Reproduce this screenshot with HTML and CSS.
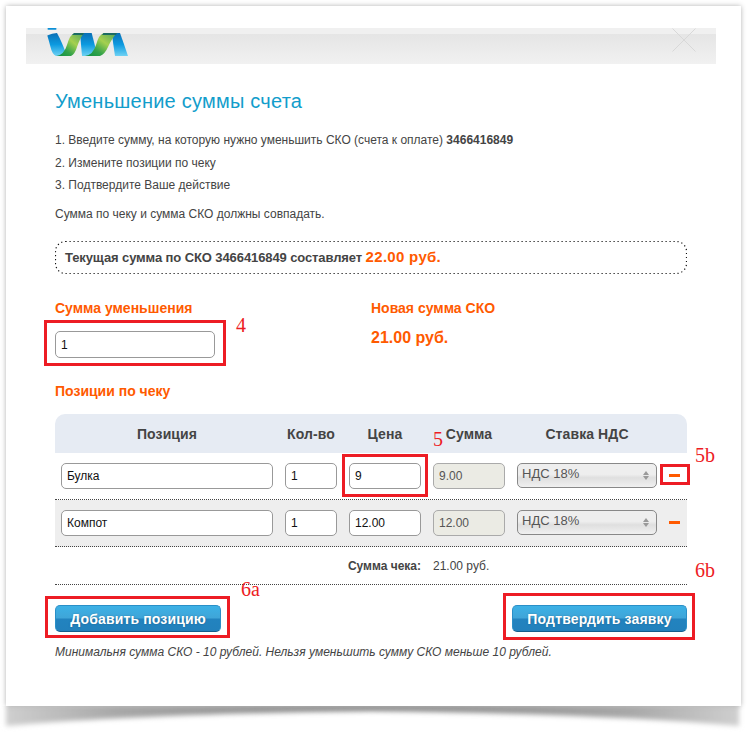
FILE: index.html
```html
<!DOCTYPE html>
<html lang="ru">
<head>
<meta charset="utf-8">
<title>Уменьшение суммы счета</title>
<link rel="stylesheet" href="styles.css">
</head>
<body>
<div class="page">
  <svg class="curl" width="755" height="29" viewBox="0 0 755 29">
    <defs>
      <filter id="soft" x="-2%" y="-30%" width="104%" height="160%"><feGaussianBlur stdDeviation="2.4"/></filter>
      <linearGradient id="curlfade" x1="0" y1="0" x2="1" y2="0">
        <stop offset="0" stop-color="#cfcfcf"/><stop offset=".15" stop-color="#a8a8a8"/><stop offset=".5" stop-color="#808080"/><stop offset=".85" stop-color="#a8a8a8"/><stop offset="1" stop-color="#cfcfcf"/>
      </linearGradient>
    </defs>
    <path d="M6 0H739V20Q610 8 372 5Q135 8 6 20Z" fill="url(#curlfade)" filter="url(#soft)"/>
  </svg>
  <main class="card">
    <header class="band">
      <svg class="logo" width="81" height="30" viewBox="0 0 81 30">
        <defs>
          <linearGradient id="blue" x1="0" y1="0" x2="0" y2="1"><stop offset="0" stop-color="#0a6fb5"/><stop offset=".5" stop-color="#0c9ae0"/><stop offset="1" stop-color="#6fd2f4"/></linearGradient>
          <linearGradient id="green" x1="0" y1="1" x2="1" y2="0"><stop offset="0" stop-color="#0b8f45"/><stop offset=".3" stop-color="#35a34a"/><stop offset=".6" stop-color="#a5d04f"/><stop offset="1" stop-color="#4fa35a"/></linearGradient>
        </defs>
        <rect x="0.5" y="0" width="9" height="1.7" rx=".8" fill="#0b8fd6"/>
        <path d="M0.3 7.5Q5 5 10 5Q15 14 20 28H9Q5 26 3.5 19Q2 13 0.3 7.5Z" fill="url(#blue)"/>
        <path d="M33 5H44.7Q47 14 50.5 28H35Z" fill="url(#blue)"/>
        <path d="M64.7 5H73Q77 16 81 28H68Z" fill="url(#blue)"/>
        <path d="M9.5 28Q17 27 20 17Q23 6 28 5H37Q33 10 30 19Q28 26 24 28Z" fill="url(#green)"/>
        <path d="M38 28Q46 27 49 17Q52 6 57 5H70Q65 10 61 19Q58 26 53 28Z" fill="url(#green)"/>
        <path d="M27 5H37L36 7H25Z M56.5 5H70L69 7H55Z" fill="#1b6b63"/>
      </svg>
      <svg class="close" width="24" height="24" viewBox="0 0 24 24"><path d="M0.5 0.5L23.5 23.5M23.5 0.5L0.5 23.5" stroke="#d8d8d8" stroke-width="1" fill="none"/></svg>
    </header>
    <div class="content">
      <h1 class="title">Уменьшение суммы счета</h1>
      <ol class="steps">
        <li>1. Введите сумму, на которую нужно уменьшить СКО (счета к оплате) <b>3466416849</b></li>
        <li>2. Измените позиции по чеку</li>
        <li>3. Подтвердите Ваше действие</li>
      </ol>
      <p class="hint">Сумма по чеку и сумма СКО должны совпадать.</p>
      <div class="current">
        <svg class="current-frame" width="632" height="33" viewBox="0 0 632 33"><rect x=".5" y=".5" width="631" height="32" rx="10" fill="none" stroke="#111" stroke-width="1.2" stroke-dasharray="1.2 2.8"/></svg>
        Текущая сумма по СКО 3466416849 составляет <span class="current-value">22.00 руб.</span>
      </div>
      <section class="amounts">
        <div class="amount-col">
          <div class="label">Сумма уменьшения</div>
          <input class="field field-amount" value="1">
        </div>
        <div class="amount-col">
          <div class="label">Новая сумма СКО</div>
          <div class="new-value">21.00 руб.</div>
        </div>
      </section>
      <div class="label label-section">Позиции по чеку</div>
      <section class="table">
        <div class="grid table-head">
          <div>Позиция</div><div>Кол-во</div><div>Цена</div><div>Сумма</div><div>Ставка НДС</div>
        </div>
        <div class="grid row">
          <input class="field" value="Булка">
          <input class="field" value="1">
          <input class="field" value="9">
          <input class="field field-off" value="9.00" disabled>
          <div class="select-wrap"><select class="select"><option>НДС 18%</option></select><span class="arrows"></span></div>
          <span class="minus"></span>
        </div>
        <div class="grid row row-alt">
          <input class="field" value="Компот">
          <input class="field" value="1">
          <input class="field" value="12.00">
          <input class="field field-off" value="12.00" disabled>
          <div class="select-wrap"><select class="select"><option>НДС 18%</option></select><span class="arrows"></span></div>
          <span class="minus"></span>
        </div>
        <div class="grid total">
          <b class="total-label">Сумма чека:</b>
          <span class="total-value">21.00 руб.</span>
        </div>
      </section>
      <div class="actions">
        <button class="btn btn-add">Добавить позицию</button>
        <button class="btn btn-confirm">Подтвердить заявку</button>
      </div>
      <p class="note">Минимальня сумма СКО - 10 рублей. Нельзя уменьшить сумму СКО меньше 10 рублей.</p>
    </div>
  </main>
  <div class="mark mark-amount"></div>
  <div class="mark mark-price"></div>
  <div class="mark mark-minus"></div>
  <div class="mark mark-add"></div>
  <div class="mark mark-confirm"></div>
  <span class="num num-4">4</span>
  <span class="num num-5">5</span>
  <span class="num num-5b">5b</span>
  <span class="num num-6a">6a</span>
  <span class="num num-6b">6b</span>
</div>
</body>
</html>
```

FILE: styles.css
```css
* { box-sizing: border-box; }
html, body { margin: 0; padding: 0; background: #fff; overflow: hidden; }
body { font-family: "Liberation Sans", Arial, sans-serif; font-size: 12px; color: #444; }
.page { position: relative; width: 755px; height: 735px; padding: 6px 0 0 6px; }
.card { position: relative; width: 735px; height: 700px; padding: 22px 25px 0 20px; background: #fff; box-shadow: 0 0 5px rgba(0,0,0,.3); }
.curl { position: absolute; left: 0; top: 706px; }
.band { position: relative; height: 36px; padding-left: 21px; background: linear-gradient(#f0f0f0 0 6px, #e5e5e5 6px, #f1f1f1 100%); }
.logo { display: block; }
.close { position: absolute; right: 20px; top: 0; }
.content { padding: 0 29px; }
.title { margin: 25px 0 0; font-size: 20px; line-height: 24px; font-weight: 400; letter-spacing: .23px; color: #129dcb; }
.steps { list-style: none; margin: 18px 0 0; padding: 0; display: flex; flex-direction: column; gap: 4.5px; }
.steps li { line-height: 18px; }
.hint { margin: 11px 0 0; line-height: 18px; }
.current { position: relative; margin-top: 18px; height: 33px; padding-left: 10px; font-size: 13px; font-weight: 700; line-height: 31px; letter-spacing: -.1px; }
.current-frame { position: absolute; left: 0; top: 0; }
.current-value { font-size: 15px; letter-spacing: .3px; color: #ff5a00; }
.amounts { display: flex; margin-top: 25px; }
.amount-col { width: 316px; }
.label { font-size: 14px; font-weight: 700; line-height: 18px; color: #ff5a00; }
.label-section { margin-top: 24px; }
.field { display: block; width: 100%; height: 26px; padding: 0 5px; border: 1px solid #999; border-radius: 5px; background: #fff; font: 12px "Liberation Sans", Arial, sans-serif; color: #111; outline: none; }
.field-amount { width: 160px; height: 27px; margin-top: 14px; }
.field-off { background: #ebebe4; color: #555; -webkit-text-fill-color: #555; opacity: 1; border-color: #aaa; }
.new-value { margin-top: 12px; font-size: 16px; font-weight: 700; line-height: 18px; color: #ff5a00; }
.table { margin-top: 14px; }
.grid { display: grid; grid-template-columns: 212px 52px 72px 72px 140px 11px; column-gap: 12px; padding: 0 6px; align-items: center; }
.table-head { height: 39px; background: #e6ebf3; border-radius: 10px 10px 0 0; font-size: 14px; font-weight: 700; text-align: center; letter-spacing: .1px; }
.row { height: 47px; padding-bottom: 1px; border-bottom: 1px dotted #444; }
.row-alt { background: #eee; }
.select-wrap { position: relative; height: 25px; margin-top: -1px; }
.select { display: block; width: 100%; height: 100%; padding: 0 0 4px 4px; appearance: none; border: 1px solid #888; border-radius: 5px; background: linear-gradient(#eee 0 45%, #dfdfdf 60%, #f0f0f0 100%); font: 13px "Liberation Sans", Arial, sans-serif; color: #555; outline: none; }
.arrows { position: absolute; right: 8px; top: 8px; width: 0; height: 0; border-left: 3px solid transparent; border-right: 3px solid transparent; border-bottom: 4px solid #999; }
.arrows::after { content: ""; position: absolute; left: -3px; top: 5px; border-left: 3px solid transparent; border-right: 3px solid transparent; border-top: 4px solid #999; }
.minus { display: block; height: 3px; background: #ff5a00; }
.total { height: 38px; border-bottom: 1px dotted #444; }
.total-label { grid-column: 1 / 4; text-align: right; }
.total-value { grid-column: 4 / 6; }
.actions { display: flex; justify-content: space-between; margin-top: 20px; }
.btn { height: 27px; padding: 0; border: 1px solid #2a8fc7; border-bottom-color: #135e8c; border-radius: 5px; background: linear-gradient(#3cb1e6 0, #3fa5d8 48%, #2283bf 52%, #2281bc 100%); color: #fff; font: 700 14px "Liberation Sans", Arial, sans-serif; letter-spacing: .15px; text-shadow: 0 0 2px rgba(0,0,0,.25); }
.btn-add { width: 166px; }
.btn-confirm { width: 175px; }
.note { margin: 11px 0 0; font-style: italic; line-height: 18px; }
.mark { position: absolute; border: 3px solid #ed1c24; }
.mark-amount { left: 44px; top: 320px; width: 182px; height: 46px; }
.mark-price { left: 342px; top: 454px; width: 86px; height: 43px; }
.mark-minus { left: 660px; top: 464px; width: 30px; height: 21px; }
.mark-add { left: 45px; top: 596px; width: 185px; height: 42px; }
.mark-confirm { left: 503px; top: 593px; width: 192px; height: 47px; }
.num { position: absolute; font: 20px/20px "Liberation Serif", "Times New Roman", serif; color: #ed1c24; }
.num-4 { left: 236px; top: 315px; }
.num-5 { left: 433px; top: 429px; }
.num-5b { left: 695px; top: 445px; }
.num-6a { left: 241px; top: 579px; }
.num-6b { left: 695px; top: 560px; }
```
